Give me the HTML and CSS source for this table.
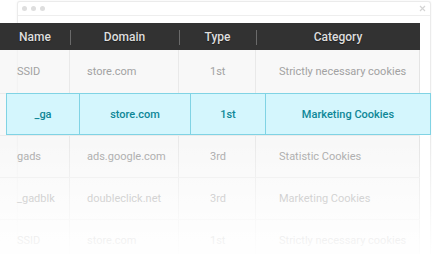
FILE: index.html
```html
<!DOCTYPE html>
<html lang="en">
<head>
<meta charset="utf-8">
<title>Cookie list</title>
<link rel="stylesheet" href="styles.css">
</head>
<body>
<div class="stage">
  <div class="window">
    <div class="titlebar">
      <span class="dot"></span><span class="dot"></span><span class="dot"></span>
      <svg class="close" width="7" height="7" viewBox="0 0 7 7"><path d="M1 1L6 6M6 1L1 6" stroke="#d4d4d4" stroke-width="1.2"/></svg>
    </div>
  </div>

  <div class="cookies">
    <div class="row head">
      <div class="cell">Name</div>
      <div class="cell">Domain</div>
      <div class="cell">Type</div>
      <div class="cell">Category</div>
    </div>
    <div class="row first">
      <div class="cell c-name">SSID</div>
      <div class="cell c-domain">store.com</div>
      <div class="cell c-type">1st</div>
      <div class="cell c-cat">Strictly necessary cookies</div>
    </div>
    <!-- slot of the selected row, shown enlarged in .focus-row -->
    <div class="row slot">
      <div class="cell"></div>
      <div class="cell"></div>
      <div class="cell"></div>
      <div class="cell"></div>
    </div>
    <div class="row">
      <div class="cell c-name">gads</div>
      <div class="cell c-domain">ads.google.com</div>
      <div class="cell c-type">3rd</div>
      <div class="cell c-cat">Statistic Cookies</div>
    </div>
    <div class="row">
      <div class="cell c-name">_gadblk</div>
      <div class="cell c-domain">doubleclick.net</div>
      <div class="cell c-type">3rd</div>
      <div class="cell c-cat">Marketing Cookies</div>
    </div>
    <div class="row">
      <div class="cell c-name">SSID</div>
      <div class="cell c-domain">store.com</div>
      <div class="cell c-type">1st</div>
      <div class="cell c-cat">Strictly necessary cookies</div>
    </div>
  </div>

  <div class="fade"></div>

  <div class="focus-row">
    <div class="fcell">_ga</div>
    <div class="fcell">store.com</div>
    <div class="fcell">1st</div>
    <div class="fcell">Marketing Cookies</div>
  </div>
</div>
</body>
</html>
```

FILE: styles.css
```css
html, body {
  margin: 0;
  padding: 0;
  background: #ffffff;
}

body {
  width: 432px;
  height: 254px;
  overflow: hidden;
  font-family: Roboto, "Liberation Sans", Arial, sans-serif;
}

/* all layers share one grid cell and stack */
.stage {
  position: relative;
  display: grid;
  width: 432px;
  height: 254px;
}

.stage > .window,
.stage > .cookies,
.stage > .fade {
  grid-area: 1 / 1;
}

/* browser window frame behind the table */
.window {
  margin: 1px 1px 0 17px;
  border: 1px solid #ebebeb;
  border-bottom: none;
  border-radius: 3px 3px 0 0;
  background: #ffffff;
  box-shadow: 0 0 3px rgba(0, 0, 0, 0.05);
}

.titlebar {
  height: 13px;
  border-bottom: 1px solid #eeeeee;
  display: flex;
  align-items: center;
  padding-left: 4px;
  gap: 4px;
}

.dot {
  width: 5px;
  height: 5px;
  border-radius: 50%;
  background: #dedede;
}

.close {
  margin-left: auto;
  margin-right: 4px;
}

/* cookie table */
.cookies {
  margin-top: 23px;
  width: 420px;
  align-self: start;
}

.row {
  display: grid;
  grid-template-columns: 70px 109px 77px 164px;
  height: 42px;
  background: rgba(246, 246, 246, 0.75);
  border-bottom: 1px solid #ebebeb;
  box-sizing: border-box;
}

.row.first {
  height: 44px;
}

.row .cell {
  display: flex;
  align-items: center;
  font-size: 11px;
  color: #a2a2a2;
  white-space: nowrap;
  border-right: 1px solid #e9e9e9;
}

.row .cell:last-child {
  border-right: 1px solid #e4e4e4;
}

.c-name { padding-left: 17px; }
.c-domain { padding-left: 17px; }
.c-type { padding-left: 31px; }
.c-cat { padding-left: 23px; }

.row.head {
  height: 27px;
  background: #323232;
  border-bottom: none;
  position: relative;
}

.row.head .cell {
  justify-content: center;
  font-size: 12px;
  font-weight: 500;
  color: #dedede;
  border-right: none;
  position: relative;
  text-shadow: 0 1px 1px rgba(0, 0, 0, 0.4);
}

.row.head .cell + .cell::before {
  content: "";
  position: absolute;
  left: 0;
  top: 7px;
  bottom: 5px;
  width: 1px;
  background: #6a6a6a;
}

/* lower rows fade into the page */
.fade {
  margin-top: 140px;
  background: linear-gradient(to bottom,
    rgba(255, 255, 255, 0) 0%,
    rgba(255, 255, 255, 0.5) 45%,
    rgba(255, 255, 255, 0.88) 85%,
    rgba(255, 255, 255, 0.95) 100%);
}

/* highlighted, enlarged row lying over the table */
.focus-row {
  position: absolute;
  left: 6px;
  top: 93px;
  width: 425px;
  height: 42px;
  box-sizing: border-box;
  display: grid;
  grid-template-columns: 73px 111px 75px 1fr;
  background: #d4f6fd;
  border: 1px solid #80d3e4;
}

.fcell {
  display: flex;
  align-items: center;
  justify-content: center;
  font-size: 11px;
  font-weight: 500;
  color: #0e8797;
  border-right: 1px solid #80d3e4;
}

.fcell:last-child {
  border-right: none;
}
```
